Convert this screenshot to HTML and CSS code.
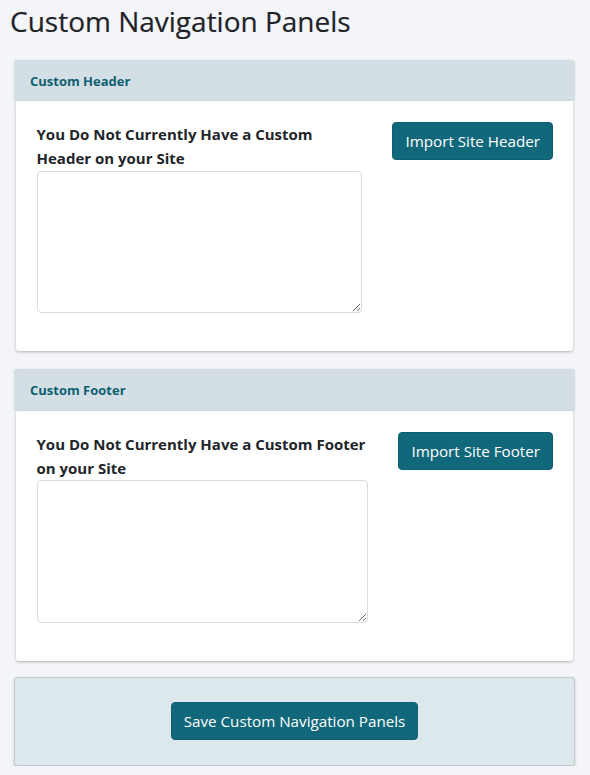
FILE: index.html
```html
<!DOCTYPE html>
<html lang="en">
<head>
<meta charset="utf-8">
<title>Custom Navigation Panels</title>
<link rel="stylesheet" href="styles.css">
</head>
<body>
<main class="page">
  <h1 class="page-title">Custom Navigation Panels</h1>

  <section class="panel">
    <div class="panel-header">Custom Header</div>
    <div class="panel-body">
      <div class="row">
        <div class="field">
          <label class="field-label" for="hdr">You Do Not Currently Have a Custom Header on your Site</label>
          <textarea id="hdr" class="field-input"></textarea>
        </div>
        <button class="btn" type="button">Import Site Header</button>
      </div>
    </div>
  </section>

  <section class="panel">
    <div class="panel-header">Custom Footer</div>
    <div class="panel-body">
      <div class="row">
        <div class="field">
          <label class="field-label" for="ftr">You Do Not Currently Have a Custom Footer on your Site</label>
          <textarea id="ftr" class="field-input"></textarea>
        </div>
        <button class="btn" type="button">Import Site Footer</button>
      </div>
    </div>
  </section>

  <div class="save-bar">
    <button class="btn" type="button">Save Custom Navigation Panels</button>
  </div>
</main>
</body>
</html>
```
FILE: styles.css
```css
html, body {
  margin: 0;
  padding: 0;
  background: #f3f5f9;
}
body {
  font-family: "Open Sans", "Noto Sans", sans-serif;
  color: #212529;
}
.page {
  padding: 5px 15px 0 14px;
}
.page-title {
  margin: 0 0 21px -4px;
  font-size: 28px;
  font-weight: 400;
  line-height: 33.6px;
  color: #1f2327;
  -webkit-text-stroke: 0.2px #1f2327;
}
.panel {
  margin-bottom: 18px;
}
.panel-header {
  background: #d3dfe5;
  color: #0e5f70;
  font-size: 13px;
  font-weight: 700;
  line-height: 18px;
  padding: 12px 16px 11.5px;
  border-radius: 3px 3px 0 0;
  box-shadow: 0 0 4px rgba(0, 0, 0, 0.06);
}
.panel-body {
  background: #fff;
  margin: 0 2px 0 1.5px;
  padding: 21px 20px 20px 21px;
  border-radius: 0 0 3px 3px;
  box-shadow: 0 1px 3px rgba(0, 0, 0, 0.28);
}
.row {
  display: flex;
  align-items: flex-start;
  gap: 30px;
}
.field {
  flex: 1;
  min-width: 0;
  margin-bottom: 18px;
}
.field-label {
  display: block;
  font-size: 15px;
  font-weight: 700;
  line-height: 24px;
  color: #212529;
}
.field-input {
  display: block;
  box-sizing: border-box;
  width: 100%;
  height: 142.5px;
  margin-top: 0.7px;
  border: 1px solid #d9dcdf;
  border-radius: 4px;
  background: #fff;
  font-family: inherit;
}
.btn {
  flex-shrink: 0;
  white-space: nowrap;
  font-family: "Open Sans", "Noto Sans", sans-serif;
  font-size: 15.2px;
  line-height: 24px;
  color: #fff;
  background: #11687a;
  border: 1px solid #0e5f70;
  border-radius: 4px;
  padding: 6px 12px;
  cursor: pointer;
}
.save-bar {
  display: flex;
  justify-content: center;
  background: #dde8ed;
  border: 1px solid #c3c9cd;
  border-radius: 3px;
  padding: 24px 0 25px;
  margin-top: -2px;
  box-shadow: 0 1px 3px rgba(0, 0, 0, 0.18);
}
```
